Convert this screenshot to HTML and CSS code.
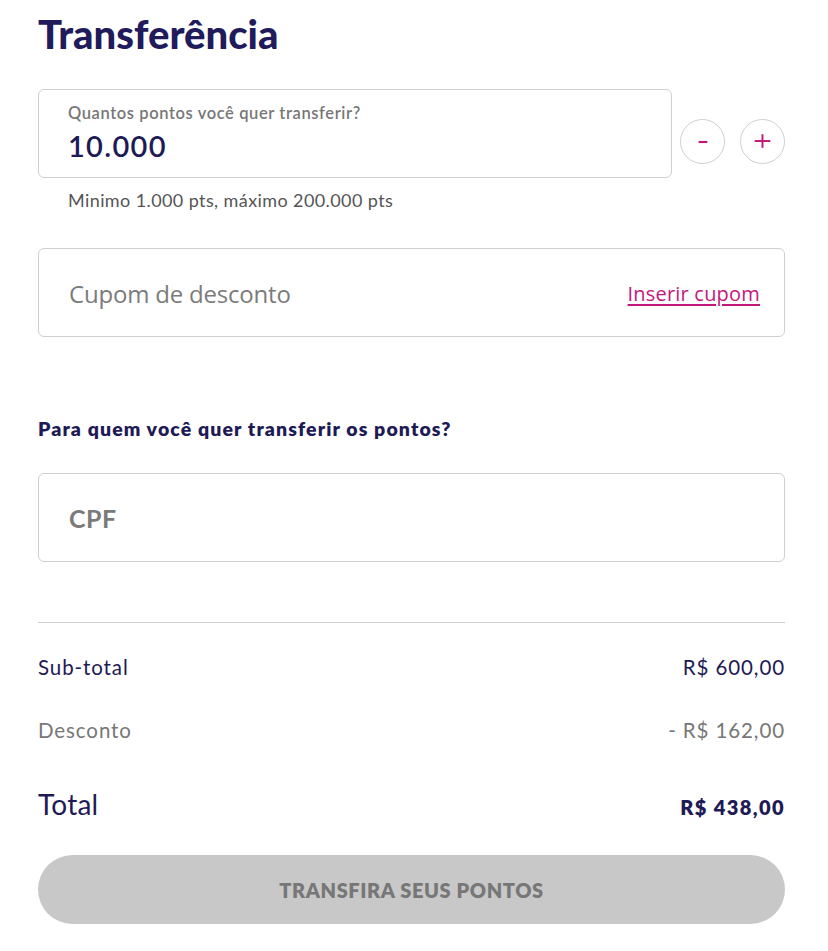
FILE: index.html
```html
<!DOCTYPE html>
<html lang="pt-BR">
<head>
<meta charset="utf-8">
<title>Transferência</title>
<link rel="stylesheet" href="styles.css">
</head>
<body>
<main class="page">
  <h1 class="title">Transferência</h1>

  <div class="points-row">
    <div class="field points-field">
      <div class="field-label">Quantos pontos você quer transferir?</div>
      <div class="field-value">10.000</div>
    </div>
    <button class="circle-btn" aria-label="Diminuir">
      <svg width="44" height="44" viewBox="0 0 44 44"><line x1="18" y1="22" x2="27" y2="22" stroke="#c4177c" stroke-width="2.2"/></svg>
    </button>
    <button class="circle-btn" aria-label="Aumentar">
      <svg width="44" height="44" viewBox="0 0 44 44"><line x1="14" y1="21" x2="30" y2="21" stroke="#c4177c" stroke-width="2"/><line x1="22" y1="14" x2="22" y2="28" stroke="#c4177c" stroke-width="2"/></svg>
    </button>
  </div>
  <p class="hint">Minimo 1.000 pts, máximo 200.000 pts</p>

  <div class="field coupon-field">
    <span class="placeholder">Cupom de desconto</span>
    <a class="link" href="#">Inserir cupom</a>
  </div>

  <h2 class="question">Para quem você quer transferir os pontos?</h2>

  <div class="field cpf-field">
    <span class="cpf">CPF</span>
  </div>

  <hr class="divider">

  <div class="summary">
    <div class="row sub">
      <span>Sub-total</span><span>R$ 600,00</span>
    </div>
    <div class="row discount">
      <span>Desconto</span><span>- R$ 162,00</span>
    </div>
    <div class="row total">
      <span class="total-label">Total</span><span class="total-value">R$ 438,00</span>
    </div>
  </div>

  <button class="submit" disabled>TRANSFIRA SEUS PONTOS</button>
</main>
</body>
</html>
```
FILE: styles.css
```css
* { box-sizing: border-box; }

body {
  margin: 0;
  background: #fff;
  font-family: Lato, "Open Sans", sans-serif;
  color: #1e1a55;
}

.page {
  padding: 10px 43px 0 38px;
}

.title {
  margin: 0;
  font-size: 40px;
  line-height: 48px;
  font-weight: 900;
  color: #211a5b;
  letter-spacing: 0;
}

.points-row {
  margin-top: 31px;
  display: flex;
  align-items: flex-start;
}

.field {
  border: 1px solid #cfcfcf;
  border-radius: 6px;
  height: 89px;
  background: #fff;
}

.points-field {
  flex: 1;
  padding: 13px 0 0 29px;
  margin-right: 8px;
}

.field-label {
  font-size: 16.5px;
  line-height: 20px;
  font-weight: 600;
  color: #777;
  letter-spacing: 0.6px;
}

.field-value {
  margin-top: 6px;
  font-size: 29px;
  line-height: 34px;
  font-weight: 600;
  color: #1e1a55;
  letter-spacing: 1.3px;
}

.circle-btn {
  width: 45px;
  height: 45px;
  margin-top: 30px;
  padding: 0;
  border: 1px solid #cfcfcf;
  border-radius: 50%;
  background: #fff;
  display: flex;
  align-items: center;
  justify-content: center;
}
.circle-btn + .circle-btn { margin-left: 15px; }
.circle-btn svg { display: block; }

.hint {
  margin: 12px 0 0 30px;
  font-size: 18px;
  line-height: 20px;
  color: #555;
  letter-spacing: 0.4px;
}

.coupon-field {
  margin-top: 38px;
  display: flex;
  align-items: center;
  justify-content: space-between;
  padding: 2px 24px 0 30px;
}

.placeholder {
  font-family: "Open Sans", sans-serif;
  font-size: 24px;
  color: #7b7b7b;
  letter-spacing: -0.2px;
}

.link {
  font-family: "Open Sans", sans-serif;
  font-size: 20px;
  color: #c4177c;
  text-decoration: underline;
  text-underline-offset: 3px;
  letter-spacing: 0.2px;
}

.question {
  margin: 80px 0 0;
  font-size: 19.5px;
  line-height: 24px;
  font-weight: 800;
  color: #1e1a55;
  letter-spacing: 1.1px;
}

.cpf-field {
  margin-top: 32px;
  display: flex;
  align-items: center;
  padding: 0 0 0 30px;
}

.cpf {
  font-size: 25px;
  font-weight: 700;
  color: #7a7a7a;
  letter-spacing: 0.5px;
}

.divider {
  margin: 60px 0 0;
  border: 0;
  border-top: 1px solid #cfcfcf;
}

.summary {
  margin-top: 32px;
  display: flex;
  flex-direction: column;
}

.row {
  display: flex;
  justify-content: space-between;
  align-items: baseline;
  font-size: 20.5px;
  line-height: 24px;
  letter-spacing: 0.9px;
}

.sub { color: #1e1a55; }
.discount { margin-top: 39px; color: #777; }

.total { margin-top: 46px; line-height: 32px; }
.total-label { font-size: 28px; color: #1e1a55; letter-spacing: 0.2px; }
.total-value { font-size: 20px; font-weight: 800; color: #1e1a55; letter-spacing: 1.4px; }

.submit {
  display: block;
  width: 100%;
  margin-top: 32px;
  height: 69px;
  border: 0;
  border-radius: 35px;
  background: #c8c8c8;
  color: #777;
  font-family: Lato, sans-serif;
  font-size: 20px;
  font-weight: 800;
  letter-spacing: 0.6px;
}
```
